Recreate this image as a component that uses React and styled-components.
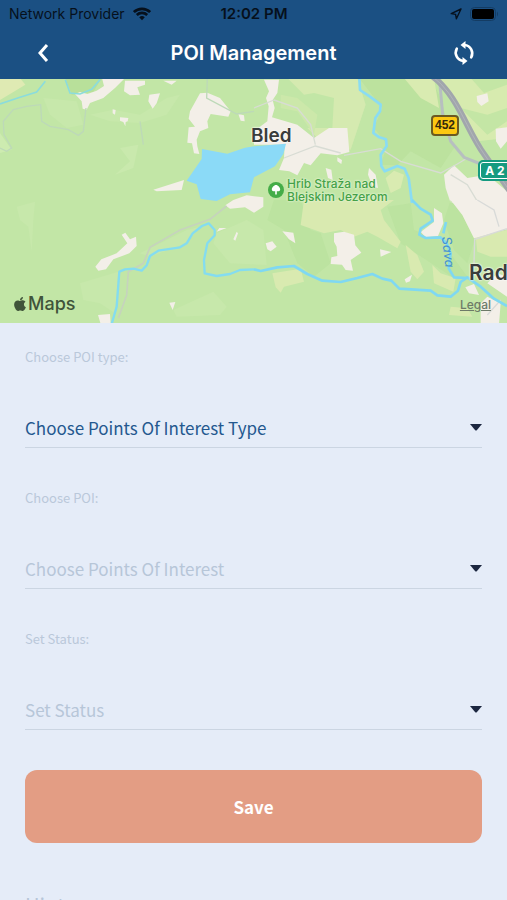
import React from 'react';
//STYLING
import styled, { createGlobalStyle } from 'styled-components';
//ICONS
import { FaApple } from 'react-icons/fa';

const fields = [
  {
    id: 'poi-type',
    label: 'Choose POI type:',
    placeholder: 'Choose Points Of Interest Type',
    active: true,
  },
  {
    id: 'poi',
    label: 'Choose POI:',
    placeholder: 'Choose Points Of Interest',
  },
  {
    id: 'status',
    label: 'Set Status:',
    placeholder: 'Set Status',
  },
];

function StatusBar() {
  return (
    <Status>
      <Carrier>
        Network Provider
        <WifiIcon viewBox="0 0 20 15" aria-hidden="true">
          <path d="M1 5.4a13 13 0 0 1 18 0M4.2 8.6a8.5 8.5 0 0 1 11.6 0" />
          <path className="dot" d="M10 14.4 6.9 11.2a4.5 4.5 0 0 1 6.2 0z" />
        </WifiIcon>
      </Carrier>
      <Clock>12:02 PM</Clock>
      <Indicators>
        <LocationIcon viewBox="0 0 12 12" aria-hidden="true">
          <path d="M11 1 1.2 5.6l4.4.8.8 4.4z" />
        </LocationIcon>
        <BatteryIcon viewBox="0 0 29 14" aria-hidden="true">
          <rect className="shell" x="0.5" y="0.5" width="25" height="13" rx="4" />
          <rect x="2" y="2" width="22" height="10" rx="2" />
          <path className="tip" d="M27 4.5q2 2.5 0 5z" />
        </BatteryIcon>
      </Indicators>
    </Status>
  );
}

function MapDrawing() {
  return (
    <MapSvg viewBox="0 0 1521 732" preserveAspectRatio="xMidYMid slice" aria-hidden="true">
      <rect width="1521" height="732" fill="#c2e6a6" />

      {/* north west */}
      <g transform="translate(0 -3)">
        <path fill="#dfeab3" d="M0 0H60L76 20 40 42 0 66z" />
        <path fill="#b8e09a" d="M196 0H305L280 42 215 50z" />
        <path fill="#c7e8ab" d="M130 60 230 70 250 140 200 150 150 110zM270 110 340 95 420 110 500 60 540 50 500 110 420 135 330 130z" />
        <path fill="#c9e9ad" d="M360 210 415 200 400 270 345 290 390 250z" />
        <path fill="#cdebb0" d="M0 165 35 215 0 225z" />
        <path fill="#f3efe8" d="M306 0H375L345 30 310 60 270 75 260 95 248 92 245 70 225 48 240 42 262 48 290 38 312 24z" />
        <path fill="#f3efe8" d="M375 8H435V20L412 28 420 50 390 52 372 40zM490 8H530L515 20z" />
        <path fill="#f3efe8" d="M448 50 480 46 470 76 458 92 445 70zM338 94 347 96 345 110 338 106zM360 118 385 120 383 130 377 132 376 145 370 132 360 128z" />
        <path fill="#f3efe8" d="M600 46 622 44 640 52 660 60 692 100 685 116 632 108 622 130 625 150 600 160 590 185 592 205 598 228 582 226 576 196 562 194 566 148 585 146 566 122 570 100z" />
        <path fill="#f3efe8" d="M715 108 732 112 734 130 722 128zM460 335 552 306 545 336 470 340z" />
        <path fill="none" stroke="#bdd9b8" strokeWidth="4" d="M0 210 20 220 35 210 12 170 10 130 40 95 80 85 122 80 125 130 150 145 205 155 235 172 250 160 258 90M622 0 620 60 710 108 762 100M420 130 430 200" />
        <path fill="none" stroke="#8bdcdc" strokeWidth="5" d="M0 78 60 58 110 42 136 10M196 5 210 45 240 48 275 34 300 5" />
      </g>

      {/* north east */}
      <g transform="translate(762 -3)">
        <path fill="#d5eab0" d="M100 0 150 50 180 45 240 60 235 150 160 150 210 200 290 215 335 80 310 0z" />
        <path fill="#cce8aa" d="M80 50 130 60 190 110 180 170 130 100 80 90z" />
        <path fill="#b9e09b" d="M315 0 385 90 360 150 400 200 380 260 430 262 470 220 560 270 600 210 560 60 530 0z" opacity="0.75" />
        <path fill="#dcecb2" d="M560 0 670 190 759 180V0z" opacity="0.8" />
        <path fill="#c4e6a5" d="M650 0 690 45 759 20V0zM620 90 700 170 759 130V90L700 110z" />
        <path fill="#d9ebb1" d="M450 0 500 60 555 90 540 0zM395 300 420 278 450 290 440 330 410 345z" />
        <path fill="#f3efe8" d="M30 5H75L70 45 56 66 62 90 54 118 130 140 180 180 225 150 280 150 286 222 250 232 200 226 150 255 130 292 106 280 75 276 90 240 92 200 0 200V160L40 130 44 85 36 60 45 40z" />
        <path fill="#f3efe8" d="M160 232 200 226 170 262 150 255zM215 270 232 275 236 306 222 300zM345 270 365 290 372 330 356 326 342 290zM250 238 264 246 262 258 250 250z" />
        <path fill="#f3efe8" d="M668 54 700 46 704 70 682 84 670 72zM725 152 759 148V190L740 212 726 190zM570 290 600 262 640 300 700 290 759 340V375H590L575 330z" />
        <path fill="none" stroke="#d8dcd4" strokeWidth="4" d="M60 66 130 90 170 140 184 200M0 90 60 66M90 240 184 204 260 225M270 232 380 212 440 250 560 285 610 258 640 240M590 290 640 320 670 370" />
        <path fill="none" stroke="#b7bfc0" strokeWidth="9" d="M558 20 566 110 590 190 630 238 680 258" />
        <path fill="none" stroke="#a1a6ac" strokeWidth="18" d="M536 -4C610 50 640 160 690 228L768 340" />
        <path fill="none" stroke="#b9bdc1" strokeWidth="2" d="M536 -4C610 50 640 160 690 228L768 340" />
        <path fill="none" stroke="#8adcf3" strokeWidth="8" strokeLinejoin="round" d="M316 0 318 36 348 56 380 80 378 100 364 120 358 165 376 178 396 184 398 204 380 230 382 264 392 280 430 264 452 272 464 300 474 375" />
      </g>

      {/* south west */}
      <g transform="translate(0 363)">
        <path fill="#c7e8ab" d="M50 20 105 5 100 60 95 155 85 80 60 60zM420 160 560 90 600 80 560 130 450 170zM240 250 355 215 345 340 300 310 250 300zM520 330 640 275 680 320 660 345 530 350zM650 100 740 60 790 90 800 195 690 190 640 130z" />
        <path fill="#f3efe8" d="M365 104 376 98 390 118 408 110 410 138 388 160 340 178 318 208 295 212 286 200 304 178 350 160 382 130zM676 16 700 0 740 -14 790 -8V20L762 38 735 22 690 26zM650 95 658 84 680 84zM700 118 710 95 714 100 706 122zM508 308 526 306 518 330zM294 345 330 342 332 372H302z" />
        <path fill="none" stroke="#c6d3bd" strokeWidth="5" d="M680 18 630 58 540 90 450 142 430 190 385 215 380 285 355 355" />
        <path fill="none" stroke="#84dcf0" strokeWidth="7" strokeLinejoin="round" d="M335 372 350 320 358 215 375 208 400 206 425 212 440 196 450 168 475 152 540 142 560 130 578 100 606 78 626 70 644 90 644 106 622 130 612 180 614 220 650 228 690 222 720 210 762 208" />
      </g>

      {/* south east */}
      <g transform="translate(762 363)">
        <path fill="#bae19d" d="M60 0H140L170 90 200 100 230 190 180 230 130 190 90 90 40 60zM400 20 470 10 480 90 560 120 640 230 600 235 540 195 440 130z" opacity="0.75" />
        <path fill="#bae19d" d="M590 0 625 45 662 120 640 190 600 150 570 60z" opacity="0.75" />
        <path fill="#d9eab0" d="M150 0H370L390 60 440 125 430 145 370 110 340 95 300 110 260 90 210 100 140 75zM55 220 140 206 150 245 90 260 80 278 65 262zM455 135 490 165 510 215 490 238 470 215zM535 195 560 220 605 235 598 275 540 250zM665 110 759 90V170L710 170 670 155zM590 320 640 325 655 350 585 345zM350 0 420 0 380 30z" />
        <path fill="#f3efe8" d="M240 100 270 95 300 104 304 136 322 158 290 180 297 212 275 210 264 194 230 192 232 172 250 168 248 140 240 125zM85 94 118 98 124 130 105 118zM35 130 55 124 68 140 50 154 40 148zM378 148 412 156 380 170zM452 238 474 224 468 244 456 248z" />
        <path fill="#f3efe8" d="M540 24 564 40 568 70 552 108 515 112 500 96 540 66zM590 0H759V88L660 115 625 45zM634 262 660 252 675 285 645 280zM680 310 700 290 740 310 735 372H680zM730 220 759 230V290L700 250z" />
        <path fill="none" stroke="#d8dad8" strokeWidth="4" d="M759 86 662 118 660 190M670 0 720 30 735 80M700 345 740 300" />
        <path fill="none" stroke="#7fd8f2" strokeWidth="8" strokeLinejoin="round" d="M0 208 20 213 70 202 120 198 160 222 205 242 260 246 310 234 355 222 385 236 412 242 436 266 530 272 550 286 590 290 612 272 620 246 640 232 680 260 720 296 759 318M474 0 500 26 530 44 536 62 500 86 496 104 515 114 560 112 578 130 590 160 584 205 600 232 640 234M568 100 576 66" />
      </g>

      {/* lake */}
      <path fill="#8bdaf7" d="M606 210 682 224 735 206 762 202 858 194 850 225 825 262 762 295 750 340 690 346 650 366 602 360 590 316 560 305 605 240z" />
    </MapSvg>
  );
}

function Field({ id, label, placeholder, active }) {
  return (
    <FieldRow>
      <Label htmlFor={id}>{label}</Label>
      <SelectWrap>
        <Select id={id} defaultValue="" $active={active}>
          <option value="">{placeholder}</option>
        </Select>
        <Caret viewBox="0 0 12 7" aria-hidden="true">
          <path d="M0 0h12L7 6q-1 1-2 0z" />
        </Caret>
      </SelectWrap>
    </FieldRow>
  );
}

function App() {
  return (
    <>
      <GlobalStyle />
      <Screen>
        <Header>
          <StatusBar />
          <NavBar>
            <NavButton type="button" aria-label="Back">
              <BackIcon viewBox="0 0 12 20" aria-hidden="true">
                <path d="M10 2 3 10 10 18" />
              </BackIcon>
            </NavButton>
            <Title>POI Management</Title>
            <NavButton type="button" aria-label="Refresh">
              <SyncIcon viewBox="0 0 24 26" aria-hidden="true">
                <path d="M12.500 5A8.300 8.300 0 0 1 19.200 17.300M11.500 21A8.300 8.300 0 0 1 4.800 8.700" />
                <path className="head" d="M13.500 1v8L8.500 5zM10.500 25v-8l5 4z" />
              </SyncIcon>
            </NavButton>
          </NavBar>
        </Header>
        <Content>
          <Map>
            <MapDrawing />
            <Town $left="251px" $top="45px">Bled</Town>
            <Town $left="469px" $top="182px" $large>Rad</Town>
            <Park>
              <ParkPin viewBox="0 0 16 16" aria-hidden="true">
                <circle cx="8" cy="8" r="8" />
                <path d="M8 3C6 3 3.800 5.800 3.800 7.400c0 1.300 1.200 2 3.400 1.900V12.500h1.600V9.300c2.200.1 3.400-.6 3.400-1.900C12.200 5.800 10 3 8 3z" />
              </ParkPin>
              <ParkName>
                <span>Hrib Straža nad</span>
                <span>Blejskim Jezerom</span>
              </ParkName>
            </Park>
            <RoadSign>452</RoadSign>
            <Motorway>A 2</Motorway>
            <River>Sava</River>
            <MapsLogo><FaApple size={16} />Maps</MapsLogo>
            <Legal href="#legal">Legal</Legal>
          </Map>
          <Form onSubmit={(e) => e.preventDefault()}>
            {fields.map((field) => (
              <Field key={field.id} {...field} />
            ))}
            <SaveButton type="submit">Save</SaveButton>
            <Hint>Hint</Hint>
          </Form>
        </Content>
      </Screen>
    </>
  );
}

const GlobalStyle = createGlobalStyle`
  * {
    box-sizing: border-box;
  }
  body {
    margin: 0;
    background: #e5ecf8;
    font-family: "Noto Sans CJK SC", "Noto Sans", sans-serif;
  }
`

const Screen = styled.div`
  display: flex;
  flex-direction: column;
  height: 100vh;
`

const Header = styled.header`
  flex: none;
  background: #1b5083;
  font-family: Inter, "Liberation Sans", sans-serif;
`

const Status = styled.div`
  display: grid;
  grid-template-columns: 1fr auto 1fr;
  align-items: center;
  height: 27px;
  padding: 0 8px 0 9px;
  color: #06101c;
  font-size: 14px;
  line-height: 20px;
`

const Carrier = styled.div`
  display: flex;
  align-items: center;
  gap: 8px;
`

const Clock = styled.div`
  font-size: 15px;
  font-weight: 600;
`

const Indicators = styled.div`
  display: flex;
  align-items: center;
  justify-content: flex-end;
  gap: 8px;
`

const WifiIcon = styled.svg`
  width: 18px;
  height: 14px;
  fill: none;
  stroke: currentColor;
  stroke-width: 3;
  .dot {
    fill: currentColor;
    stroke: none;
  }
`

const LocationIcon = styled.svg`
  width: 12px;
  height: 12px;
  fill: none;
  stroke: currentColor;
  stroke-width: 1.4;
  stroke-linejoin: round;
`

const BatteryIcon = styled.svg`
  width: 29px;
  height: 14px;
  fill: #000;
  .shell {
    fill: none;
    stroke: #143c63;
  }
  .tip {
    fill: #143c63;
  }
`

const NavBar = styled.div`
  display: flex;
  align-items: center;
  justify-content: space-between;
  height: 52px;
  padding: 0 23px;
`

const NavButton = styled.button`
  display: flex;
  align-items: center;
  justify-content: center;
  width: 40px;
  height: 40px;
  padding: 0;
  border: 0;
  background: none;
  color: #fff;
  cursor: pointer;
`

const BackIcon = styled.svg`
  width: 12px;
  height: 20px;
  fill: none;
  stroke: currentColor;
  stroke-width: 3;
`

const SyncIcon = styled.svg`
  width: 24px;
  height: 26px;
  fill: none;
  stroke: currentColor;
  stroke-width: 2.6;
  stroke-linecap: round;
  .head {
    fill: currentColor;
    stroke: none;
  }
`

const Title = styled.h1`
  margin: 0;
  color: #fff;
  font-size: 20px;
  font-weight: 600;
  line-height: 28px;
`

const Content = styled.main`
  flex: 1;
  min-height: 0;
  overflow-y: auto;
  scrollbar-width: none;
`

const Map = styled.section`
  position: relative;
  height: 244px;
  overflow: hidden;
  font-family: Inter, "Liberation Sans", sans-serif;
`

const MapSvg = styled.svg`
  display: block;
  width: 100%;
  height: 100%;
`

const Town = styled.span`
  position: absolute;
  left: ${(props) => props.$left};
  top: ${(props) => props.$top};
  color: #3a3d3c;
  font-size: ${(props) => (props.$large ? '21px' : '19px')};
  font-weight: 600;
  line-height: 24px;
  text-shadow: 0 0 2px #fff, 0 0 2px #fff;
`

const Park = styled.div`
  position: absolute;
  left: 268px;
  top: 98px;
  display: flex;
  align-items: center;
  gap: 3px;
  color: #45a147;
  font-size: 12px;
  font-weight: 500;
  line-height: 13px;
  white-space: nowrap;
  text-shadow: 0 0 2px #e9f6dc, 0 0 2px #e9f6dc;
`

const ParkPin = styled.svg`
  width: 16px;
  height: 16px;
  fill: #fff;
  circle {
    fill: #45ad48;
  }
`

const ParkName = styled.div`
  display: flex;
  flex-direction: column;
`

const RoadSign = styled.span`
  position: absolute;
  left: 431px;
  top: 36px;
  width: 28px;
  border: 2px solid #6b5a22;
  border-radius: 4px;
  background: #fcc812;
  color: #332a0c;
  font-family: "Liberation Sans", sans-serif;
  font-size: 12px;
  font-weight: 700;
  line-height: 17px;
  text-align: center;
`

const Motorway = styled.span`
  position: absolute;
  left: 478px;
  top: 81px;
  width: 34px;
  border: 2px solid #159a80;
  border-radius: 5px;
  background: #159a80;
  box-shadow: inset 0 0 0 1px #fff;
  color: #fff;
  font-size: 12px;
  font-weight: 700;
  line-height: 17px;
  text-align: center;
`

const River = styled.span`
  position: absolute;
  left: 433px;
  top: 166px;
  color: #4793d0;
  font-size: 13px;
  font-style: italic;
  line-height: 14px;
  transform: rotate(84deg);
`

const MapsLogo = styled.div`
  position: absolute;
  left: 12px;
  bottom: 7px;
  display: flex;
  align-items: center;
  color: #40543a;
  font-size: 18px;
  font-weight: 500;
  line-height: 24px;
`

const Legal = styled.a`
  position: absolute;
  right: 16px;
  bottom: 10px;
  color: #6d7a68;
  font-size: 12px;
  font-weight: 500;
  line-height: 16px;
`

const Form = styled.form`
  display: flex;
  flex-direction: column;
  gap: 40px;
  padding: 24px 25px;
`

const FieldRow = styled.div`
  display: flex;
  flex-direction: column;
  gap: 40px;
`

const Label = styled.label`
  color: #bac8da;
  font-size: 13px;
  line-height: 20px;
`

const SelectWrap = styled.div`
  position: relative;
  border-bottom: 1px solid #cbd5e2;
`

const Select = styled.select`
  display: block;
  width: 100%;
  height: 40px;
  padding: 0 24px 0 0;
  border: 0;
  appearance: none;
  background: none;
  color: ${(props) => (props.$active ? '#24588f' : '#b7c6d8')};
  font-family: inherit;
  font-size: 17px;
`

const Caret = styled.svg`
  position: absolute;
  right: 0;
  top: 17px;
  width: 12px;
  height: 7px;
  fill: #1c2740;
  pointer-events: none;
`

const SaveButton = styled.button`
  height: 73px;
  border: 0;
  border-radius: 12px;
  background: #e39d84;
  color: #fff;
  font-family: inherit;
  font-size: 17px;
  font-weight: 700;
  cursor: pointer;
`

const Hint = styled.p`
  margin: 0;
  color: #b7c6d8;
  font-size: 20px;
  line-height: 44px;
`

export default App;
